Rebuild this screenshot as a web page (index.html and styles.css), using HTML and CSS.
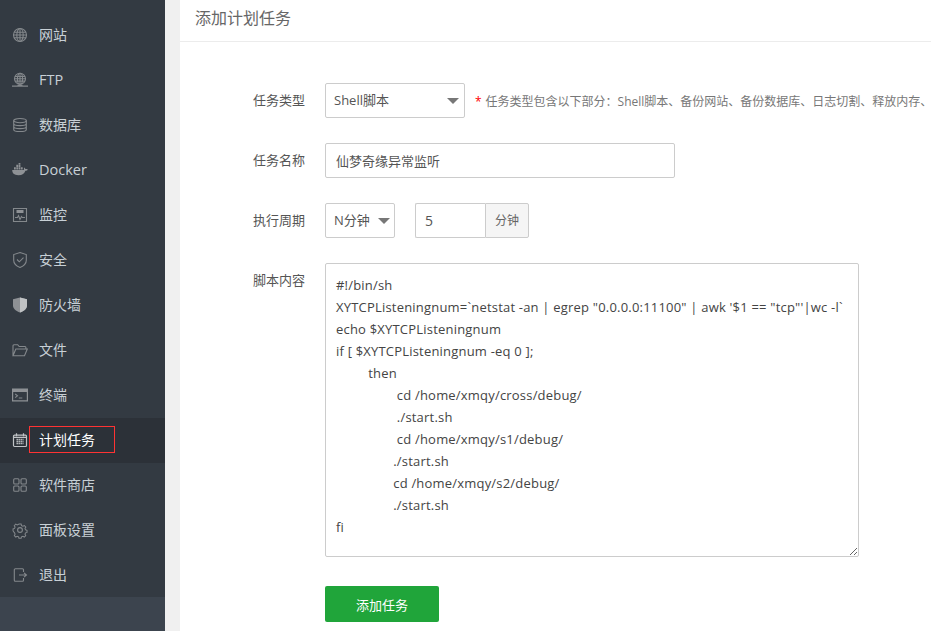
FILE: index.html
```html
<!DOCTYPE html>
<html lang="zh-CN">
<head>
<meta charset="utf-8">
<title>添加计划任务</title>
<link rel="stylesheet" href="styles.css">
</head>
<body>
<div class="app">
  <nav class="sidebar">
    <ul class="menu">
      <li class="item"><svg class="ico" viewBox="0 0 14 14"><circle cx="7" cy="7" r="6.500"/><ellipse cx="7" cy="7" rx="3.200" ry="6.500"/><path d="M7 .5v13M1.200 4.200h11.600M.5 7h13M1.200 9.800h11.600"/></svg><span>网站</span></li>
      <li class="item"><svg class="ico ico-wide" viewBox="0 0 16 14"><circle cx="8" cy="5.800" r="5.500"/><ellipse cx="8" cy="5.800" rx="2.600" ry="5.500"/><path d="M8 .3v11M3 3.500h10M2.500 5.800h11M3 8.100h10"/><path class="thick" d="M0 13.200h16M5.500 12.300h5"/></svg><span class="latin">FTP</span></li>
      <li class="item"><svg class="ico" viewBox="0 0 14 14"><ellipse cx="7" cy="2.600" rx="6.300" ry="2.100"/><path d="M.7 2.600v8.800c0 1.200 2.800 2.100 6.300 2.100s6.300-.9 6.300-2.100V2.600M.7 5.500c0 1.200 2.800 2.100 6.300 2.100s6.300-.9 6.300-2.100M.7 8.500c0 1.200 2.800 2.100 6.300 2.100s6.300-.9 6.300-2.100"/></svg><span>数据库</span></li>
      <li class="item"><svg class="ico ico-wide" viewBox="0 0 16 12"><path class="solid" d="M.2 6h11.600c.3-1.200 0-2 .3-2.500.8.300 1.200.9 1.300 1.500.7-.2 1.600-.1 2.400.4-.5 1-1.400 1.300-2.400 1.300-.8 2.600-3 4.500-7 4.500C2 11.200.2 9 .2 6z"/><path class="solid" d="M2 3.200h1.800v2.200H2zM4.300 3.200h1.800v2.200H4.300zM6.600 3.200h1.800v2.200H6.600zM8.900 3.200h1.800v2.200H8.900zM4.300.8h1.800V3H4.300zM6.600.8h1.800V3H6.600zM6.600-1h1.800V.6H6.600z"/></svg><span class="latin">Docker</span></li>
      <li class="item"><svg class="ico" viewBox="0 0 14 14"><path d="M.5.500h13v13H.5z"/><path class="solid" d="M3.500 2h7v3h-7z"/><path d="M2 9.500h2.500l1-2 1.500 4 1.500-3 .8 1H12"/></svg><span>监控</span></li>
      <li class="item"><svg class="ico ico-tall" viewBox="0 0 14 16"><path d="M7 .6l6.300 2v5.600c0 3.400-2.700 5.800-6.300 7.200C3.400 14 .7 11.600.7 8.200V2.600z"/><path d="M4 7.500l2.300 2.300L10.500 5.600"/></svg><span>安全</span></li>
      <li class="item"><svg class="ico ico-tall" viewBox="0 0 14 16"><path class="solid" d="M7 .5l7 1.800v6.200c0 3.300-3 5.600-7 7-4-1.400-7-3.700-7-7V2.300z"/><path class="half" d="M7 .5l7 1.800v6.200c0 3.300-3 5.600-7 7z"/></svg><span>防火墙</span></li>
      <li class="item"><svg class="ico ico-wide" viewBox="0 0 16 14"><path d="M1 12.500V2.700c0-.6.400-1 1-1h3.700l1.500 1.800h5.800c.5 0 .9.400.9 1V6M1 12.800h11.500l2.800-6.800H3.800z"/></svg><span>文件</span></li>
      <li class="item"><svg class="ico ico-wide" viewBox="0 0 16 13"><path class="solid" d="M0 0h16v13H0zM1.200 3.600v8.200h13.600V3.600z" fill-rule="evenodd"/><path d="M3.200 5.500l2.300 1.800-2.300 1.800M6.800 9.500h3.500"/></svg><span>终端</span></li>
      <li class="item active"><svg class="ico" viewBox="0 0 14 14"><path d="M1.500 2.200h11c.5 0 1 .4 1 1v9.300c0 .5-.5 1-1 1h-11c-.5 0-1-.5-1-1V3.200c0-.6.500-1 1-1z"/><path d="M3.500.3v3M10.500.3v3M1 4.400h12"/><path class="dots" d="M3.500 6.500h7M3.500 8.500h7M3.500 10.500h7"/></svg><span class="mark">计划任务</span></li>
      <li class="item"><svg class="ico" viewBox="0 0 14 14"><rect x=".7" y=".7" width="5.300" height="5.300" rx="1"/><rect x="8" y=".7" width="5.300" height="5.300" rx="1"/><rect x=".7" y="8" width="5.300" height="5.300" rx="1"/><rect x="8" y="8" width="5.300" height="5.300" rx="1"/></svg><span>软件商店</span></li>
      <li class="item"><svg class="ico" viewBox="0 0 14 14"><circle cx="7" cy="7" r="2.400"/><path d="M5.800.7h2.400l.4 1.700 1.500.7 1.600-.8 1.600 1.700-.9 1.500.6 1.500 1.600.5v2.300l-1.600.5-.6 1.400.8 1.500-1.600 1.600-1.500-.8-1.500.6-.4 1.600H5.800l-.4-1.600-1.500-.6-1.500.8-1.600-1.600.8-1.500-.6-1.400L-.6 8.200V6l1.600-.5.6-1.500-.9-1.500 1.600-1.700 1.600.8 1.500-.7z" transform="translate(.6 .4) scale(.92)"/></svg><span>面板设置</span></li>
      <li class="item"><svg class="ico" viewBox="0 0 14 14"><path d="M10.500 4V1.800c0-.6-.4-1-1-1H2.300c-.6 0-1 .4-1 1v10.400c0 .6.400 1 1 1h7.200c.6 0 1-.4 1-1V10M6 7h7.500M11 4.800L13.500 7 11 9.200"/></svg><span>退出</span></li>
    </ul>
  </nav>
  <main class="main">
    <header class="head">添加计划任务</header>
    <form class="form">
      <div class="row row-type">
        <label class="label">任务类型</label>
        <div class="select select-type">Shell脚本<i class="caret"></i></div>
        <p class="hint"><em class="star">*</em>任务类型包含以下部分：Shell脚本、备份网站、备份数据库、日志切割、释放内存、</p>
      </div>
      <div class="row">
        <label class="label">任务名称</label>
        <input class="input" type="text" value="仙梦奇缘异常监听">
      </div>
      <div class="row">
        <label class="label">执行周期</label>
        <div class="select select-cycle">N分钟<i class="caret"></i></div>
        <div class="group"><input class="num" type="text" value="5"><span class="unit">分钟</span></div>
      </div>
      <div class="row row-script">
        <label class="label">脚本内容</label>
        <textarea class="script" spellcheck="false">#!/bin/sh
XYTCPListeningnum=`netstat -an | egrep "0.0.0.0:11100" | awk '$1 == "tcp"'|wc -l`
echo $XYTCPListeningnum
if [ $XYTCPListeningnum -eq 0 ];
         then
                 cd /home/xmqy/cross/debug/
                 ./start.sh
                 cd /home/xmqy/s1/debug/
                ./start.sh
                cd /home/xmqy/s2/debug/
                ./start.sh
fi</textarea>
      </div>
      <button class="submit" type="button">添加任务</button>
    </form>
  </main>
</div>
</body>
</html>
```

FILE: styles.css
```css
* { box-sizing: border-box; }
html, body { margin: 0; height: 100%; overflow: hidden; }
body {
  font-family: "Open Sans", "Noto Sans CJK SC", sans-serif;
  color: #555;
  background: #f0f0f0;
}
.app { display: flex; height: 631px; }
.sidebar { width: 165px; flex: none; background: #3c444e; }
.menu { list-style: none; margin: 0; padding: 13px 0 0; background: #333a42; height: 597px; }
.item {
  display: flex; align-items: center;
  height: 45px; padding: 0 0 3px 13px;
  font-size: 14px; color: #c8d0d6;
}
.item span { margin-left: 12px; }
.item .ico-wide + span { margin-left: 11px; }
.item .latin { font-size: 14.500px; }
.ico {
  width: 14px; height: 14px; flex: none; overflow: visible; margin-top: 2px;
  fill: none; stroke: #84888c; stroke-width: 1.100;
}
.ico-wide { width: 16px; margin-left: -1px; }
.ico-tall { height: 16px; }
.ico .solid { fill: #8e9195; stroke: none; }
.ico .half { fill: #c0c2c4; stroke: none; }
.ico .thick { stroke-width: 1.200; }
.active { background: #2c3138; color: #fff; }
.active .ico { stroke: #c0c3c6; stroke-width: 1.200; }
.active .dots { stroke-dasharray: 1.400 .6; stroke-width: 1.400; }
.active .mark {
  margin-left: 2px; padding-left: 9px;
  width: 86px; height: 27px; line-height: 25px;
  border: 1px solid #f33;
  white-space: nowrap;
}
.main { margin-left: 15px; flex: 1; min-width: 0; background: #fff; }
.head {
  height: 42px; padding: 7px 15px 0;
  border-bottom: 1px solid #ececec;
  font-size: 16px; line-height: 22px; color: #666;
}
.form { padding: 41px 0 0 0; }
.row { display: flex; align-items: center; height: 35px; margin-bottom: 25px; white-space: nowrap; }
.row-script { height: 294px; align-items: flex-start; margin-bottom: 29px; }
.label { width: 125px; flex: none; text-align: right; font-size: 13px; color: #555; line-height: 35px; margin-right: 20px; }
.select {
  position: relative; height: 35px; flex: none;
  border: 1px solid #ccc; border-radius: 2px;
  font-size: 13px; line-height: 33px; padding-left: 8px; color: #555;
}
.select-type { width: 140px; }
.select-cycle { width: 70px; }
.caret {
  position: absolute; right: 4px; top: 14px;
  border: 6px solid transparent; border-bottom: 0; border-top: 6px solid #777;
}
.select-type .caret { right: 5px; }
.hint { margin: 0 0 0 10px; font-size: 12px; color: #777; }
.star { font-style: normal; color: #f00; margin-right: 4px; }
.input {
  width: 350px; height: 35px; padding: 0 10px;
  border: 1px solid #ccc; border-radius: 2px;
  font: 13px "Open Sans", "Noto Sans CJK SC", sans-serif; color: #555;
}
.group { display: flex; margin-left: 20px; height: 35px; }
.num {
  width: 70px; padding: 0 9px;
  border: 1px solid #ccc; border-right: 0; border-radius: 2px 0 0 2px;
  font: 14px "Open Sans", "Noto Sans CJK SC", sans-serif; color: #555;
}
.unit {
  width: 44px; border: 1px solid #ccc; border-radius: 0 2px 2px 0;
  background: #f5f5f5; text-align: center;
  font-size: 12px; line-height: 33px; color: #666;
}
.script {
  display: block; width: 534px; height: 294px; padding: 10px;
  border: 1px solid #ccc; border-radius: 2px;
  font: 13px/22px "Open Sans", "Noto Sans CJK SC", sans-serif; color: #444;
  letter-spacing: .2px;
  white-space: pre; overflow: hidden; outline: 0;
}
.submit {
  display: block; margin-left: 145px;
  width: 114px; height: 36px; border: 0; border-radius: 2px;
  background: #20a53a; color: #fff;
  font: 13px "Open Sans", "Noto Sans CJK SC", sans-serif;
}
```
